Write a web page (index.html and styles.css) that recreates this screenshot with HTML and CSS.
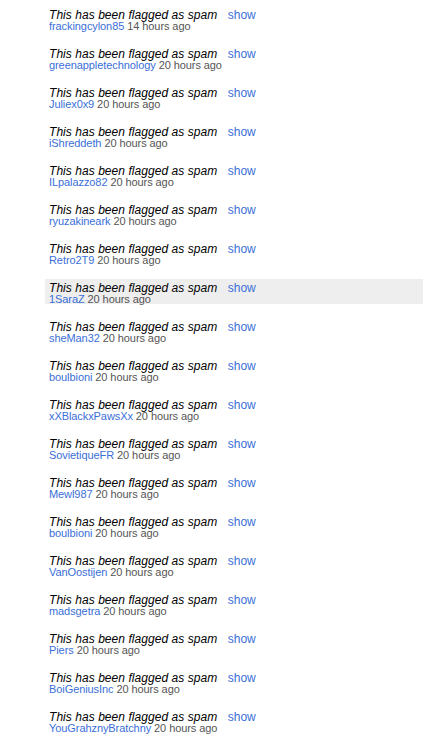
FILE: index.html
```html
<!DOCTYPE html>
<html lang="en">
<head>
    <meta charset="UTF-8">
    <meta name="viewport" content="width=device-width, initial-scale=1.0">
    <title>Comments</title>
    <link rel="stylesheet" href="styles.css">
</head>
<body>

    <div class="comments">
        <div class="comment">
            <div class="flag"><em>This has been flagged as spam</em> <a href="#" class="show">show</a></div>
            <div class="meta"><a href="#" class="user">frackingcylon85</a> 14 hours ago</div>
        </div>
        <div class="comment">
            <div class="flag"><em>This has been flagged as spam</em> <a href="#" class="show">show</a></div>
            <div class="meta"><a href="#" class="user">greenappletechnology</a> 20 hours ago</div>
        </div>
        <div class="comment">
            <div class="flag"><em>This has been flagged as spam</em> <a href="#" class="show">show</a></div>
            <div class="meta"><a href="#" class="user">Juliex0x9</a> 20 hours ago</div>
        </div>
        <div class="comment">
            <div class="flag"><em>This has been flagged as spam</em> <a href="#" class="show">show</a></div>
            <div class="meta"><a href="#" class="user">iShreddeth</a> 20 hours ago</div>
        </div>
        <div class="comment">
            <div class="flag"><em>This has been flagged as spam</em> <a href="#" class="show">show</a></div>
            <div class="meta"><a href="#" class="user">ILpalazzo82</a> 20 hours ago</div>
        </div>
        <div class="comment">
            <div class="flag"><em>This has been flagged as spam</em> <a href="#" class="show">show</a></div>
            <div class="meta"><a href="#" class="user">ryuzakineark</a> 20 hours ago</div>
        </div>
        <div class="comment">
            <div class="flag"><em>This has been flagged as spam</em> <a href="#" class="show">show</a></div>
            <div class="meta"><a href="#" class="user">Retro2T9</a> 20 hours ago</div>
        </div>
        <div class="comment hover">
            <div class="flag"><em>This has been flagged as spam</em> <a href="#" class="show">show</a></div>
            <div class="meta"><a href="#" class="user">1SaraZ</a> 20 hours ago</div>
        </div>
        <div class="comment">
            <div class="flag"><em>This has been flagged as spam</em> <a href="#" class="show">show</a></div>
            <div class="meta"><a href="#" class="user">sheMan32</a> 20 hours ago</div>
        </div>
        <div class="comment">
            <div class="flag"><em>This has been flagged as spam</em> <a href="#" class="show">show</a></div>
            <div class="meta"><a href="#" class="user">boulbioni</a> 20 hours ago</div>
        </div>
        <div class="comment">
            <div class="flag"><em>This has been flagged as spam</em> <a href="#" class="show">show</a></div>
            <div class="meta"><a href="#" class="user">xXBlackxPawsXx</a> 20 hours ago</div>
        </div>
        <div class="comment">
            <div class="flag"><em>This has been flagged as spam</em> <a href="#" class="show">show</a></div>
            <div class="meta"><a href="#" class="user">SovietiqueFR</a> 20 hours ago</div>
        </div>
        <div class="comment">
            <div class="flag"><em>This has been flagged as spam</em> <a href="#" class="show">show</a></div>
            <div class="meta"><a href="#" class="user">Mewl987</a> 20 hours ago</div>
        </div>
        <div class="comment">
            <div class="flag"><em>This has been flagged as spam</em> <a href="#" class="show">show</a></div>
            <div class="meta"><a href="#" class="user">boulbioni</a> 20 hours ago</div>
        </div>
        <div class="comment">
            <div class="flag"><em>This has been flagged as spam</em> <a href="#" class="show">show</a></div>
            <div class="meta"><a href="#" class="user">VanOostijen</a> 20 hours ago</div>
        </div>
        <div class="comment">
            <div class="flag"><em>This has been flagged as spam</em> <a href="#" class="show">show</a></div>
            <div class="meta"><a href="#" class="user">madsgetra</a> 20 hours ago</div>
        </div>
        <div class="comment">
            <div class="flag"><em>This has been flagged as spam</em> <a href="#" class="show">show</a></div>
            <div class="meta"><a href="#" class="user">Piers</a> 20 hours ago</div>
        </div>
        <div class="comment">
            <div class="flag"><em>This has been flagged as spam</em> <a href="#" class="show">show</a></div>
            <div class="meta"><a href="#" class="user">BoiGeniusInc</a> 20 hours ago</div>
        </div>
        <div class="comment">
            <div class="flag"><em>This has been flagged as spam</em> <a href="#" class="show">show</a></div>
            <div class="meta"><a href="#" class="user">YouGrahznyBratchny</a> 20 hours ago</div>
        </div>
    </div>

</body>
</html>
```

FILE: styles.css
```css
body {
    margin: 0;
    font-family: "Liberation Sans", Arial, sans-serif;
    background-color: #fff;
}
.comments {
    padding: 6px 0 0 45px;
}
.comment {
    padding: 3px 4px 0;
    margin-bottom: 14px;
}
.comment.hover {
    background-color: #eeeeee;
}
.flag {
    font-size: 12px;
    line-height: 12px;
    color: #000;
    letter-spacing: 0.05px;
}
.flag em {
    margin-right: 7px;
}
.meta {
    font-size: 11px;
    line-height: 10px;
    color: #555;
    letter-spacing: -0.08px;
}
a {
    text-decoration: none;
}
.show {
    color: #3a6fd8;
}
.user {
    color: #3a6fd8;
}
```
